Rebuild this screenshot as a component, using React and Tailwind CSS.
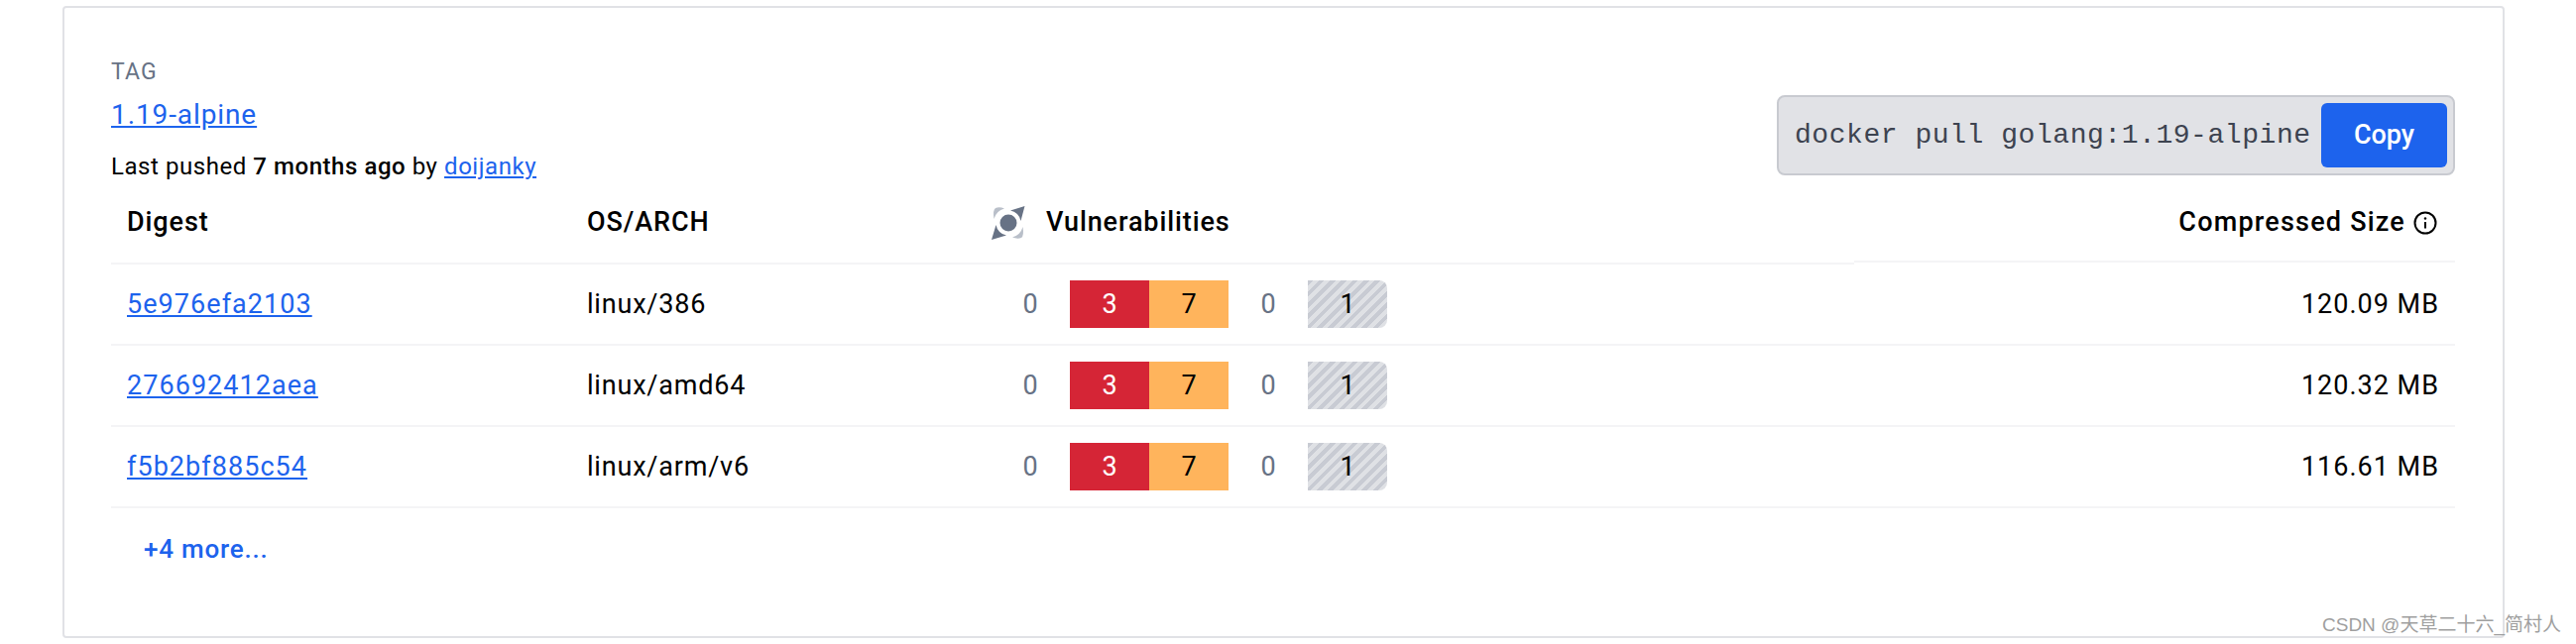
import React from "react";

const rows = [
  { digest: "5e976efa2103", arch: "linux/386", size: "120.09 MB" },
  { digest: "276692412aea", arch: "linux/amd64", size: "120.32 MB" },
  { digest: "f5b2bf885c54", arch: "linux/arm/v6", size: "116.61 MB" },
];

const ScoutIcon = () => (
  <svg width="36" height="36" viewBox="0 0 36 36" className="shrink-0">
    <circle cx="18" cy="18" r="8.5" fill="#677285" />
    <path d="M34.5 1 L30.5 16 A13 13 0 0 0 20 5.5 Z" fill="#677285" />
    <path d="M1 35 L5.5 20 A13 13 0 0 0 16 30.5 Z" fill="#677285" />
    <path d="M3.5 14 A15 15 0 0 1 14 3.5 Q9 1.5 5 3 Q2 5 3.5 14 Z" fill="#b9bfc9" />
    <path d="M32.5 22 A15 15 0 0 1 22 32.5 Q27 34.5 31 33 Q34 31 32.5 22 Z" fill="#b9bfc9" />
  </svg>
);

const InfoIcon = () => (
  <svg width="24" height="24" viewBox="0 0 24 24" fill="none" stroke="#000" strokeWidth="2" className="shrink-0">
    <circle cx="12" cy="12" r="10.5" />
    <path d="M12 11v6.5" />
    <circle cx="12" cy="7.5" r="1.2" fill="#000" stroke="none" />
  </svg>
);

const App = () => {
  return (
    <div className="relative h-[650px] w-[2598px] bg-white pt-[6px] pl-[63px] font-['Roboto',sans-serif] text-black">
      <div className="h-[638px] w-[2463px] rounded-[4px] border-2 border-[#e1e2e6] pt-[47px] pl-[47px] pr-[48px]">
        <div className="flex justify-between">
          <div>
            <div className="text-[23px] leading-[36px] tracking-[1.1px] text-[#677285]">TAG</div>
            <a className="block text-[28px] leading-[44px] mt-[3px] tracking-[0.9px] text-[#1d63ed] underline">1.19-alpine</a>
            <div className="text-[24px] leading-[36px] mt-[12px] tracking-[0.55px]">
              Last pushed <span className="font-medium">7 months ago</span> by{" "}
              <a className="text-[#1d63ed] underline">doijanky</a>
            </div>
          </div>
          <div className="mt-[41px] flex h-[81px] w-[684px] items-center justify-between rounded-[8px] border-2 border-[#c8cad0] bg-[#e1e2e6] pl-[16px] pr-[6px]">
            <span className="font-['Liberation_Mono',monospace] text-[28px] tracking-[0.55px] text-[#3d4350] whitespace-nowrap">
              docker pull golang:1.19-alpine
            </span>
            <button className="h-[65px] w-[127px] rounded-[6px] bg-[#1d63ed] text-[27px] font-medium text-white">Copy</button>
          </div>
        </div>

        <div className="grid grid-cols-[480px_407px_871px_606px]">
          <div className="flex h-[81px] items-center border-b-2 border-[#f4f4f6] pb-[2px] pl-[16px] text-[27px] font-medium tracking-[0.9px]">Digest</div>
          <div className="flex h-[81px] items-center border-b-2 border-[#f4f4f6] pb-[2px] text-[27px] font-medium tracking-[0.9px]">OS/ARCH</div>
          <div className="flex h-[81px] items-center gap-[20px] border-b-2 border-[#f4f4f6] pb-[2px] text-[27px] font-medium tracking-[0.9px]">
            <ScoutIcon />
            Vulnerabilities
          </div>
          <div className="flex h-[79px] items-center justify-end gap-[8px] self-start border-b-2 border-[#f4f4f6] pr-[18px] text-[27px] font-medium tracking-[1.2px]">
            Compressed Size
            <InfoIcon />
          </div>

          {rows.map((row) => (
            <React.Fragment key={row.digest}>
              <div className="flex h-[82px] items-center border-b-2 border-[#f4f4f6] pl-[16px] text-[27px] tracking-[1.05px]">
                <a className="text-[#1d63ed] underline">{row.digest}</a>
              </div>
              <div className="flex h-[82px] items-center border-b-2 border-[#f4f4f6] text-[27px] tracking-[0.8px]">{row.arch}</div>
              <div className="flex h-[82px] items-center border-b-2 border-[#f4f4f6] text-[27px]">
                <div className="flex h-[48px] w-[80px] items-center justify-center text-[#677285]">0</div>
                <div className="flex h-[48px] w-[80px] items-center justify-center bg-[#d52536] text-white">3</div>
                <div className="flex h-[48px] w-[80px] items-center justify-center bg-[#ffb45c]">7</div>
                <div className="flex h-[48px] w-[80px] items-center justify-center text-[#677285]">0</div>
                <div className="flex h-[48px] w-[80px] items-center justify-center rounded-r-[8px] bg-[repeating-linear-gradient(135deg,#c8cbd3_0,#c8cbd3_4px,#dfe1e5_4px,#dfe1e5_8px)]">1</div>
              </div>
              <div className="flex h-[82px] items-center justify-end border-b-2 border-[#f4f4f6] pr-[16px] text-[27px] tracking-[1px]">{row.size}</div>
            </React.Fragment>
          ))}
        </div>

        <button className="mt-[23px] ml-[33px] text-[26px] font-medium leading-[36px] tracking-[0.8px] text-[#1d63ed]">+4 more...</button>
      </div>

      <div className="absolute left-[2342px] top-[618px] font-['Liberation_Sans','Noto_Sans_CJK_SC',sans-serif] text-[19px] leading-[26px] text-[#9f9f9f] whitespace-nowrap">
        CSDN @天草二十六_简村人
      </div>
    </div>
  );
};

export default App;
